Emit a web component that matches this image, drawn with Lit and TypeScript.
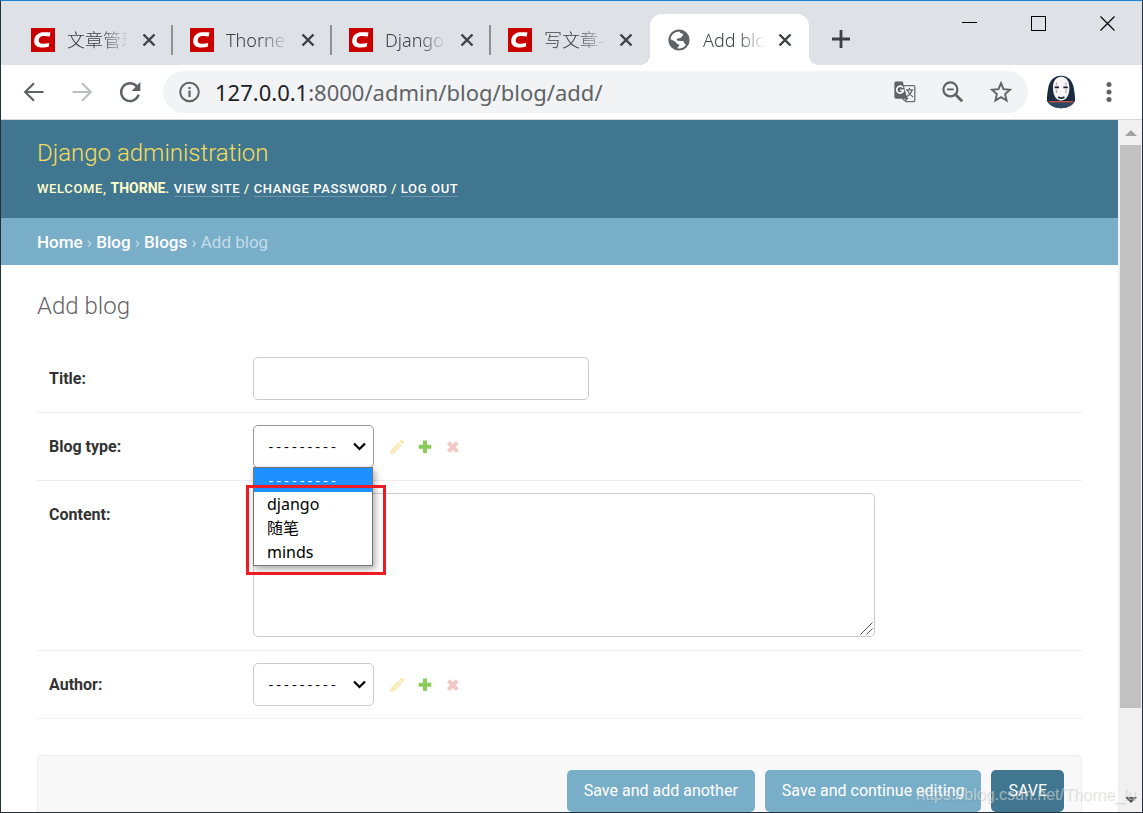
import { LitElement, html, css, nothing } from "lit";
import { customElement, property } from "lit/decorators.js";

const closeGlyph = html`<svg width="14" height="14" viewBox="0 0 14 14" aria-hidden="true">
  <path d="M1.5 1.5L12.5 12.5M12.5 1.5L1.5 12.5" fill="none" stroke="#3c4043" stroke-width="2.4" />
</svg>`;

const csdnIcon = html`<svg width="24" height="24" viewBox="0 0 24 24" aria-hidden="true">
  <rect width="24" height="24" fill="#ca0000" />
  <path
    d="M19.5 4.6L18.7 8.6C16.6 8 13.8 7.8 11.8 8C9.2 8.2 7.9 10 7.7 12.2C7.6 14.4 9 15.6 11.5 15.7C13.8 15.8 16.2 15.5 18.3 14.9L17.7 18.8C15.2 19.5 12.2 19.8 9.3 19.4C5.2 18.9 3 16.5 3.2 12.8C3.5 8 6.6 4.9 11.6 4.3C14.4 4 17.4 4.1 19.5 4.6Z"
    fill="#fff"
  />
</svg>`;

const globeIcon = html`<svg width="24" height="24" viewBox="0 0 24 24" aria-hidden="true">
  <circle cx="12" cy="12" r="9.6" fill="#fff" stroke="#5f6368" stroke-width="2" />
  <path
    d="M12.6 2.2C17.9 2.6 22 6.8 22 12C22 14 21.4 15.6 20.4 17.2C18.9 17.2 17.6 16.3 17.3 14.7C17 13.4 16.3 12.9 14.9 12.9L10.8 12.7C9.6 12.6 9.4 11 10.4 10.4L13.4 9.9C14.6 9.6 14.7 8.1 15.8 7.4C16.7 6.8 15.9 5.5 14.7 5.6C13.4 5.6 12.2 4 12.6 2.2Z"
    fill="#5f6368"
  />
  <path
    d="M2.3 10.4L7.6 13.2C9.6 14.2 9.2 15.7 11 16C12.6 16.3 12.5 18.3 11.3 18.8C10.1 19.4 10.5 21 10.7 21.8C5.6 21.2 2 17 2.3 10.4Z"
    fill="#5f6368"
  />
</svg>`;

interface Tab {
  title: string;
  active?: boolean;
  divider?: boolean;
}

const tabs: Tab[] = [
  { title: "文章管理", divider: true },
  { title: "Thorne_", divider: true },
  { title: "Django", divider: true },
  { title: "写文章-C" },
  { title: "Add blog", active: true },
];

@customElement("browser-tabs")
class BrowserTabs extends LitElement {
  static styles = css`
    :host {
      display: flex;
      height: 64px;
      padding-left: 13px;
      background: #dee1e6;
      font-family: "Noto Sans", "Noto Sans CJK SC", sans-serif;
    }
    button {
      display: grid;
      place-items: center;
      margin: 0;
      padding: 0;
      border: 0;
      background: none;
    }
    .tab {
      box-sizing: border-box;
      display: flex;
      align-items: center;
      width: 159px;
      height: 51px;
      margin-top: 13px;
      padding: 0 17px;
    }
    .divider {
      background: linear-gradient(#8e9196, #8e9196) right center / 2px 30px no-repeat;
    }
    .title {
      flex: 1;
      margin: 0 12px;
      overflow: hidden;
      white-space: nowrap;
      font-size: 18px;
      font-weight: 300;
      line-height: 26px;
      color: #3c4043;
      mask-image: linear-gradient(90deg, #000 55%, transparent 98%);
    }
    .active {
      position: relative;
      border-radius: 12px 12px 0 0;
      background: #fff;
    }
    .active::before,
    .active::after {
      content: "";
      position: absolute;
      bottom: 0;
      width: 10px;
      height: 10px;
    }
    .active::before {
      right: 100%;
      background: radial-gradient(circle at 0 0, transparent 10px, #fff 10px);
    }
    .active::after {
      left: 100%;
      background: radial-gradient(circle at 100% 0, transparent 10px, #fff 10px);
    }
    .new {
      width: 32px;
      height: 49px;
      margin: 13px 0 0 16px;
    }
    .window {
      display: flex;
      margin-left: auto;
    }
    .window button {
      width: 69px;
      height: 44px;
    }
  `;

  render() {
    return html`
      ${tabs.map(
        (t) => html`<div class="tab ${t.active ? "active" : ""} ${t.divider ? "divider" : ""}">
          ${t.active ? globeIcon : csdnIcon}
          <span class="title">${t.title}</span>
          <button aria-label="Close tab">${closeGlyph}</button>
        </div>`
      )}
      <button class="new" aria-label="New tab">
        <svg width="18" height="18" viewBox="0 0 18 18"><path d="M9 0V18M0 9H18" stroke="#3c4043" stroke-width="2.8" /></svg>
      </button>
      <div class="window">
        <button aria-label="Minimize">
          <svg width="15" height="15" viewBox="0 0 15 15"><path d="M0 6.5H15" stroke="#000" /></svg>
        </button>
        <button aria-label="Maximize">
          <svg width="15" height="15" viewBox="0 0 15 15"><rect x=".5" y=".5" width="14" height="14" fill="none" stroke="#000" /></svg>
        </button>
        <button aria-label="Close">
          <svg width="15" height="15" viewBox="0 0 15 15"><path d="M.5 .5L14.5 14.5M14.5 .5L.5 14.5" stroke="#000" stroke-width="1.2" /></svg>
        </button>
      </div>
    `;
  }
}

@customElement("browser-toolbar")
class BrowserToolbar extends LitElement {
  static styles = css`
    :host {
      display: flex;
      align-items: center;
      height: 54px;
      padding: 0 9px;
      border-bottom: 1px solid #d6d7d9;
      background: #fff;
    }
    button {
      display: grid;
      place-items: center;
      flex: none;
      width: 48px;
      height: 42px;
      margin: 0;
      padding: 0;
      border: 0;
      background: none;
    }
    .address {
      flex: 1;
      display: flex;
      align-items: center;
      min-width: 0;
      height: 42px;
      margin: 0 9px;
      padding-right: 3px;
      border-radius: 21px;
      background: #f1f3f4;
    }
    .info {
      width: 52px;
    }
    .url {
      flex: 1;
      overflow: hidden;
      white-space: nowrap;
      font: 22px/32px "Noto Sans", sans-serif;
      color: #5f6368;
    }
    .host {
      color: #202124;
    }
  `;

  render() {
    return html`
      <button aria-label="Back">
        <svg width="24" height="24" viewBox="0 0 24 24" fill="none" stroke="#5f6368" stroke-width="2.2">
          <path d="M21.5 12H4M12 3.2L3.2 12L12 20.8" />
        </svg>
      </button>
      <button aria-label="Forward">
        <svg width="24" height="24" viewBox="0 0 24 24" fill="none" stroke="#bdbec0" stroke-width="2.2">
          <path d="M2.5 12H20M12 3.2L20.8 12L12 20.8" />
        </svg>
      </button>
      <button aria-label="Reload">
        <svg width="24" height="24" viewBox="0 0 24 24">
          <path d="M18.9 6.4A8.9 8.9 0 1 0 20.6 14.6" fill="none" stroke="#5f6368" stroke-width="2.4" />
          <path d="M22.4 2V10.9H13.5Z" fill="#5f6368" />
        </svg>
      </button>
      <div class="address">
        <button class="info" aria-label="Site information">
          <svg width="24" height="24" viewBox="0 0 24 24">
            <circle cx="12.5" cy="12" r="9.3" fill="none" stroke="#5f6368" stroke-width="2" />
            <path d="M12.5 10.6V17M12.5 7V9" stroke="#5f6368" stroke-width="2.2" />
          </svg>
        </button>
        <span class="url"><span class="host">127.0.0.1</span>:8000/admin/blog/blog/add/</span>
        <button aria-label="Translate">
          <svg width="22" height="22" viewBox="0 0 22 22" fill="none">
            <path d="M8 4.6H19.8Q20.8 4.6 20.8 5.6V19.6Q20.8 20.6 19.8 20.6H12L8.4 17.6" stroke="#6b6e72" stroke-width="1.3" />
            <path d="M2 .5H8.8L13.3 17.7H2Q.4 17.7 .4 16V2.1Q.4 .5 2 .5Z" fill="#5f6368" />
            <path d="M12.2 14.8L14.4 17.8L11.2 20.6Z" fill="#5f6368" />
            <path d="M9 6.6A3.5 3.5 0 1 0 9.6 9.4H6.2" stroke="#fff" stroke-width="1.6" />
            <path d="M12 8.8H19.2M15.4 7V8.8M18 9C17.2 12.4 14.8 14.4 12.8 15.6M13.4 9.4C14.4 12 16.8 14.6 19 16" stroke="#5f6368" stroke-width="1.2" />
          </svg>
        </button>
        <button aria-label="Zoom">
          <svg width="22" height="22" viewBox="0 0 22 22" fill="none" stroke="#5f6368">
            <circle cx="8.4" cy="8.4" r="7" stroke-width="2.2" />
            <path d="M13.4 13.4L20.2 20.2" stroke-width="2.8" />
            <path d="M5 8.4H11.8" stroke-width="1.8" />
          </svg>
        </button>
        <button aria-label="Bookmark">
          <svg width="24" height="24" viewBox="0 0 24 24">
            <path
              d="M12 3.2L14.5 9.2L21 9.8L16.1 14.1L17.6 20.5L12 17.1L6.4 20.5L7.9 14.1L3 9.8L9.5 9.2Z"
              fill="none"
              stroke="#5f6368"
              stroke-width="1.9"
            />
          </svg>
        </button>
      </div>
      <button aria-label="Profile">
        <svg width="30" height="34" viewBox="0 0 30 34">
          <path d="M15 .8C22 .8 26.5 5.5 27.8 13C28.6 18 29.3 22 29 26C26 31 20.5 33.2 15 33.2C9.5 33.2 4 31 1 26C.7 22 1.4 18 2.2 13C3.5 5.5 8 .8 15 .8Z" fill="#1b2a41" />
          <path d="M2 27.6C5 31.6 10 33.2 15 33.2C20 33.2 25 31.6 28 27.6Z" fill="#2f4862" />
          <path d="M3 26.8H27.4" stroke="#e8604c" stroke-width="1.2" />
          <path d="M15.2 1.8C21 1.8 23.6 7 23.4 13.4C23.2 20 20.4 25.4 15.2 25.4C10 25.4 7.2 20 7 13.4C6.8 7 9.4 1.8 15.2 1.8Z" fill="#f7f5f5" />
          <path d="M8.6 12.4H13M17.4 12.4H21.8" stroke="#111d30" stroke-width="1.8" />
          <path d="M10.5 7.5V10.5M20 7.5V10.5M10.5 14.4V18M20 14.4V18" stroke="#b5adb5" stroke-width="1.4" />
          <path d="M12.2 22Q15.2 24.2 18.4 22" fill="none" stroke="#1b2a41" stroke-width="1.8" />
        </svg>
      </button>
      <button aria-label="Menu">
        <svg width="6" height="20" viewBox="0 0 6 20" fill="#5f6368">
          <circle cx="3" cy="2.6" r="2.5" /><circle cx="3" cy="10" r="2.5" /><circle cx="3" cy="17.4" r="2.5" />
        </svg>
      </button>
    `;
  }
}

@customElement("related-select")
class RelatedSelect extends LitElement {
  @property() name = "";
  @property() label = "";
  @property({ type: Array }) options: string[] = [];
  @property({ type: Boolean, reflect: true }) open = false;

  static styles = css`
    :host {
      display: flex;
      align-items: center;
      font-family: Roboto, sans-serif;
    }
    label {
      flex: none;
      width: 204px;
      font-size: 16px;
      line-height: 20px;
      font-weight: 700;
      color: #333;
    }
    .picker {
      position: relative;
      display: grid;
      width: 121px;
    }
    select {
      grid-area: 1 / 1;
      appearance: none;
      box-sizing: border-box;
      width: 100%;
      height: 43px;
      margin: 0;
      padding: 2px 13px 0;
      border: 1px solid #ccc;
      border-radius: 5px;
      outline: none;
      background: #fff;
      color: #000;
      font: 13px/20px "Liberation Mono", monospace;
    }
    :host([open]) select {
      border-color: #999;
    }
    .chevron {
      grid-area: 1 / 1;
      place-self: center end;
      margin-right: 8px;
      pointer-events: none;
    }
    .menu {
      position: absolute;
      z-index: 1;
      top: 42px;
      left: 0;
      box-sizing: border-box;
      width: 120px;
      margin: 0;
      padding: 0 0 1px;
      border: 1px solid #767676;
      background: #fff;
      box-shadow: 2px 3px 7px rgba(0, 0, 0, 0.35);
      list-style: none;
      color: #000;
      font: 16px/24px "Noto Sans", "Noto Sans CJK SC", sans-serif;
    }
    .item {
      box-sizing: border-box;
      height: 24px;
      padding-left: 13px;
    }
    .current {
      padding-top: 2px;
      background: #1e90ff;
      color: #fff;
      font: 13px/24px "Liberation Mono", monospace;
    }
    .mark {
      position: absolute;
      z-index: 2;
      top: 60px;
      left: -7px;
      box-sizing: border-box;
      width: 140px;
      height: 90px;
      border: 3px solid #ed1c24;
      pointer-events: none;
    }
    .actions {
      display: flex;
      align-items: center;
      gap: 12px;
      margin-left: 15px;
    }
    a {
      display: flex;
    }
    .off {
      opacity: 0.3;
    }
  `;

  render() {
    const blank = "---------";
    return html`
      <label for="field">${this.label}</label>
      <div class="picker">
        <select id="field" name=${this.name}>
          <option>${blank}</option>
          ${this.options.map((o) => html`<option>${o}</option>`)}
        </select>
        <svg class="chevron" width="13" height="9" viewBox="0 0 13 9">
          <path d="M1 1.5L6.5 7L12 1.5" fill="none" stroke="#000" stroke-width="2.2" />
        </svg>
        ${this.open
          ? html`<ul class="menu" role="listbox">
                <li class="item current" role="option" aria-selected="true">${blank}</li>
                ${this.options.map((o) => html`<li class="item" role="option">${o}</li>`)}
              </ul>
              <div class="mark"></div>`
          : nothing}
      </div>
      <div class="actions">
        <a class="off" aria-label="Change selected">
          <svg width="16" height="16" viewBox="0 0 16 16" fill="#efb80b">
            <path d="M10.3 2.6L11.7 1.1Q12.6 .4 13.5 1.2L14.8 2.5Q15.6 3.4 14.9 4.3L13.5 5.8Z" />
            <path d="M9.5 3.3L12.8 6.6L5.2 14.2L1 14.9L1.7 11Z" />
            <path d="M4.8 11.4L10.4 5.8M2.6 12.4L3.6 13.4" stroke="#fff" stroke-width=".7" />
          </svg>
        </a>
        <a href="#add" aria-label="Add another">
          <svg width="16" height="16" viewBox="0 0 16 16">
            <path d="M8 1.5V14.1M1.7 7.7H14.3" stroke="#8bcb57" stroke-width="4" />
          </svg>
        </a>
        <a class="off" aria-label="Delete selected">
          <svg width="16" height="16" viewBox="0 0 16 16">
            <path d="M3.4 3.6L12.4 12.6M12.4 3.6L3.4 12.6" stroke="#dd4646" stroke-width="4" />
          </svg>
        </a>
      </div>
    `;
  }
}

@customElement("admin-page")
class AdminPage extends LitElement {
  static styles = css`
    :host {
      display: block;
      overflow: hidden;
      background: #fff;
      color: #333;
      font-family: Roboto, sans-serif;
      font-size: 16px;
      line-height: 20px;
    }
    .header {
      box-sizing: border-box;
      height: 98px;
      padding: 16px 36px 0;
      background: #417690;
      color: #ffc;
    }
    .brand {
      margin: 0 0 8px;
      font-size: 24px;
      font-weight: 300;
      line-height: 34px;
      color: #f5dd5d;
    }
    .tools {
      font-size: 13px;
      line-height: 20px;
      font-weight: 500;
      letter-spacing: 0.05em;
      text-transform: uppercase;
    }
    .tools strong {
      font-size: 14px;
      letter-spacing: 0;
      font-weight: 700;
    }
    .tools a {
      border-bottom: 1px solid rgba(255, 255, 255, 0.25);
      color: #fff;
      text-decoration: none;
    }
    .crumbs {
      padding: 14px 36px 13px;
      background: #79aec8;
      color: #c4dce8;
      font-size: 17px;
    }
    .crumbs a {
      color: #fff;
      font-weight: 500;
      text-decoration: none;
    }
    .content {
      padding: 24px 36px 0;
    }
    h2 {
      margin: 0 0 22px;
      font-size: 24px;
      font-weight: 300;
      line-height: 34px;
      color: #666;
    }
    .row {
      display: flex;
      padding: 12px;
      border-bottom: 1px solid #eee;
    }
    .row label {
      flex: none;
      width: 204px;
      padding-top: 12px;
      font-weight: 700;
    }
    input,
    textarea {
      box-sizing: border-box;
      margin: 0;
      padding: 6px;
      border: 1px solid #ccc;
      border-radius: 5px;
      outline: none;
      background: #fff;
      font: inherit;
    }
    input {
      width: 336px;
      height: 43px;
    }
    .area {
      display: grid;
      padding-bottom: 1px;
    }
    textarea {
      grid-area: 1 / 1;
      width: 622px;
      height: 144px;
      resize: none;
    }
    .grip {
      grid-area: 1 / 1;
      place-self: end;
      margin: 0 2px 2px 0;
      pointer-events: none;
    }
    .submit {
      display: flex;
      justify-content: flex-end;
      gap: 10px;
      margin-top: 36px;
      padding: 14px 17px;
      border: 1px solid #eee;
      border-radius: 5px;
      background: #f8f8f8;
    }
    .submit button {
      height: 42px;
      margin: 0;
      padding: 0 17px;
      border: 0;
      border-radius: 5px;
      background: #79aec8;
      color: #fff;
      font: 400 16px/20px Roboto, sans-serif;
    }
    .submit .save {
      background: #417690;
    }
  `;

  render() {
    return html`
      <header class="header">
        <h1 class="brand">Django administration</h1>
        <div class="tools">
          Welcome, <strong>Thorne</strong>. <a href="#site">View site</a> / <a href="#password">Change password</a> /
          <a href="#logout">Log out</a>
        </div>
      </header>
      <nav class="crumbs">
        <a href="#home">Home</a> › <a href="#blog">Blog</a> › <a href="#blogs">Blogs</a> › Add blog
      </nav>
      <main class="content">
        <h2>Add blog</h2>
        <form>
          <div class="row">
            <label for="title">Title:</label>
            <input id="title" type="text" />
          </div>
          <div class="row">
            <related-select name="blog_type" label="Blog type:" .options=${["django", "随笔", "minds"]} open></related-select>
          </div>
          <div class="row">
            <label for="content">Content:</label>
            <div class="area">
              <textarea id="content"></textarea>
              <svg class="grip" width="13" height="13" viewBox="0 0 13 13">
                <path d="M.5 12.5L12.5 .5M6.5 12.5L12.5 6.5" stroke="#555" />
              </svg>
            </div>
          </div>
          <div class="row">
            <related-select name="author" label="Author:"></related-select>
          </div>
          <div class="submit">
            <button type="button">Save and add another</button>
            <button type="button">Save and continue editing</button>
            <button type="button" class="save">SAVE</button>
          </div>
        </form>
      </main>
    `;
  }
}

@customElement("app-root")
class AppRoot extends LitElement {
  static styles = css`
    :host {
      position: relative;
      box-sizing: border-box;
      display: flex;
      flex-direction: column;
      height: 100vh;
      overflow: hidden;
      border: 1px solid #24313a;
      border-top-color: #1a82d6;
    }
    browser-tabs,
    browser-toolbar {
      flex: none;
    }
    .view {
      flex: 1;
      display: flex;
      min-height: 0;
    }
    admin-page {
      flex: 1;
      min-width: 0;
    }
    .scroll {
      box-sizing: border-box;
      flex: none;
      display: flex;
      flex-direction: column;
      width: 24px;
      padding: 0 1px 0 2px;
      background: #f1f1f1;
    }
    .arrow {
      flex: none;
      display: grid;
      place-items: center;
      height: 25px;
    }
    .thumb {
      flex: 563;
      background: #c1c1c1;
    }
    .rest {
      flex: 79;
    }
    .watermark {
      position: absolute;
      right: 6px;
      bottom: 7px;
      z-index: 3;
      font: 16px/20px "Liberation Sans", sans-serif;
      color: rgba(255, 255, 255, 0.45);
      text-shadow: 1px 1px 1px rgba(130, 130, 130, 0.3);
      pointer-events: none;
    }
  `;

  render() {
    return html`
      <browser-tabs></browser-tabs>
      <browser-toolbar></browser-toolbar>
      <div class="view">
        <admin-page></admin-page>
        <div class="scroll">
          <div class="arrow"><svg width="12" height="6" viewBox="0 0 12 6"><path d="M0 6L6 0L12 6Z" fill="#a3a3a3" /></svg></div>
          <div class="thumb"></div>
          <div class="rest"></div>
          <div class="arrow"><svg width="12" height="6" viewBox="0 0 12 6"><path d="M0 0L6 6L12 0Z" fill="#505050" /></svg></div>
        </div>
      </div>
      <div class="watermark">https://blog.csdn.net/Thorne_lu</div>
    `;
  }
}
